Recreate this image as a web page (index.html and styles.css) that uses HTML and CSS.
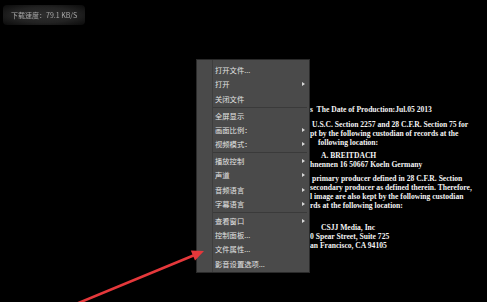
FILE: index.html
```html
<!DOCTYPE html>
<html lang="zh-CN">
<head>
<meta charset="utf-8">
<title>播放器菜单</title>
<link rel="stylesheet" href="styles.css">
</head>
<body>
<div class="screen">
  <div class="status">下载速度：79.1 KB/S</div>
  <div class="notice">
    <div class="para">
      <div class="ln">s&nbsp; The Date of Production:Jul.05 2013</div>
    </div>
    <div class="para gap">
      <div class="ln in-s">U.S.C. Section 2257 and 28 C.F.R. Section 75 for</div>
      <div class="ln">pt by the following custodian of records at the</div>
      <div class="ln in-m">following location:</div>
    </div>
    <div class="para gap-sm">
      <div class="ln in-l">A. BREITDACH</div>
      <div class="ln">hnennen 16 50667 Koeln Germany</div>
    </div>
    <div class="para gap-md">
      <div class="ln in-s">primary producer defined in 28 C.F.R. Section</div>
      <div class="ln">secondary producer as defined therein. Therefore,</div>
      <div class="ln">l image are also kept by the following custodian</div>
      <div class="ln">rds at the following location:</div>
    </div>
    <div class="para gap-lg">
      <div class="ln in-l">CSJJ Media, Inc</div>
      <div class="ln">0 Spear Street, Suite 725</div>
      <div class="ln">an Francisco, CA 94105</div>
    </div>
  </div>
  <ul class="menu">
    <li class="item">打开文件...</li>
    <li class="item sub">打开</li>
    <li class="item">关闭文件</li>
    <li class="sep"></li>
    <li class="item">全屏显示</li>
    <li class="item sub">画面比例：</li>
    <li class="item sub">视频模式：</li>
    <li class="sep"></li>
    <li class="item sub">播放控制</li>
    <li class="item sub">声道</li>
    <li class="item sub">音频语言</li>
    <li class="item sub">字幕语言</li>
    <li class="sep"></li>
    <li class="item sub">查看窗口</li>
    <li class="item">控制面板...</li>
    <li class="item">文件属性...</li>
    <li class="item">影音设置选项...</li>
  </ul>
  <svg class="arrow" width="487" height="302" viewBox="0 0 487 302">
    <line x1="76" y1="304" x2="194" y2="255.2" stroke="#e5383b" stroke-width="2.6" stroke-linecap="round"/>
    <polygon points="204,251 190.8,250.6 195,260.4" fill="#e5383b"/>
  </svg>
</div>
</body>
</html>
```

FILE: styles.css
```css
html, body {
  margin: 0;
  padding: 0;
  background: #000;
}

.screen {
  position: relative;
  width: 487px;
  height: 302px;
  overflow: hidden;
  background: #000;
}

.status {
  display: inline-block;
  margin: 5px 0 0 3px;
  padding: 0 8px;
  height: 20px;
  line-height: 20px;
  font-family: "Noto Sans CJK SC", "DejaVu Sans", sans-serif;
  font-size: 7px;
  color: #a8a8a8;
  background: radial-gradient(ellipse at center, #2e2e2e 0%, #222 55%, #0a0a0a 100%);
  border-radius: 4px;
  filter: blur(0.4px);
}

.notice {
  width: 176px;
  margin: 80px 0 0 310px;
  font-family: "Liberation Serif", "Times New Roman", serif;
  font-weight: bold;
  font-size: 7.6px;
  line-height: 9px;
  color: #f4f4f4;
  white-space: nowrap;
}

.gap {
  margin-top: 6px;
}

.gap-sm {
  margin-top: 4px;
}

.gap-md {
  margin-top: 5px;
}

.gap-lg {
  margin-top: 13px;
}

.in-s {
  padding-left: 2px;
}

.in-m {
  padding-left: 8px;
}

.in-l {
  padding-left: 11px;
}

.menu {
  position: absolute;
  left: 197px;
  top: 60px;
  width: 112px;
  margin: 0;
  padding: 3px 0 1.5px;
  list-style: none;
  box-sizing: border-box;
  background:
    linear-gradient(to right, transparent 15px, #3d3d3d 15px, #3d3d3d 16px, transparent 16px),
    #4a4a4a;
  box-shadow: 0 0 0 1px #2a2a2a;
  font-family: "Noto Sans CJK SC", "DejaVu Sans", sans-serif;
  font-size: 7.3px;
  color: #e2e2e2;
}

.item {
  position: relative;
  height: 14.25px;
  line-height: 14.25px;
  padding-left: 18px;
  white-space: nowrap;
}

.item.sub::after {
  content: "";
  position: absolute;
  right: 4px;
  top: 5px;
  border-left: 3px solid #d8d8d8;
  border-top: 2.2px solid transparent;
  border-bottom: 2.2px solid transparent;
}

.sep {
  height: 0;
  margin: 1px 2px 0.75px 16px;
  border-top: 1px solid #3a3a3a;
}

.arrow {
  position: absolute;
  left: 0;
  top: 0;
  pointer-events: none;
}
```
